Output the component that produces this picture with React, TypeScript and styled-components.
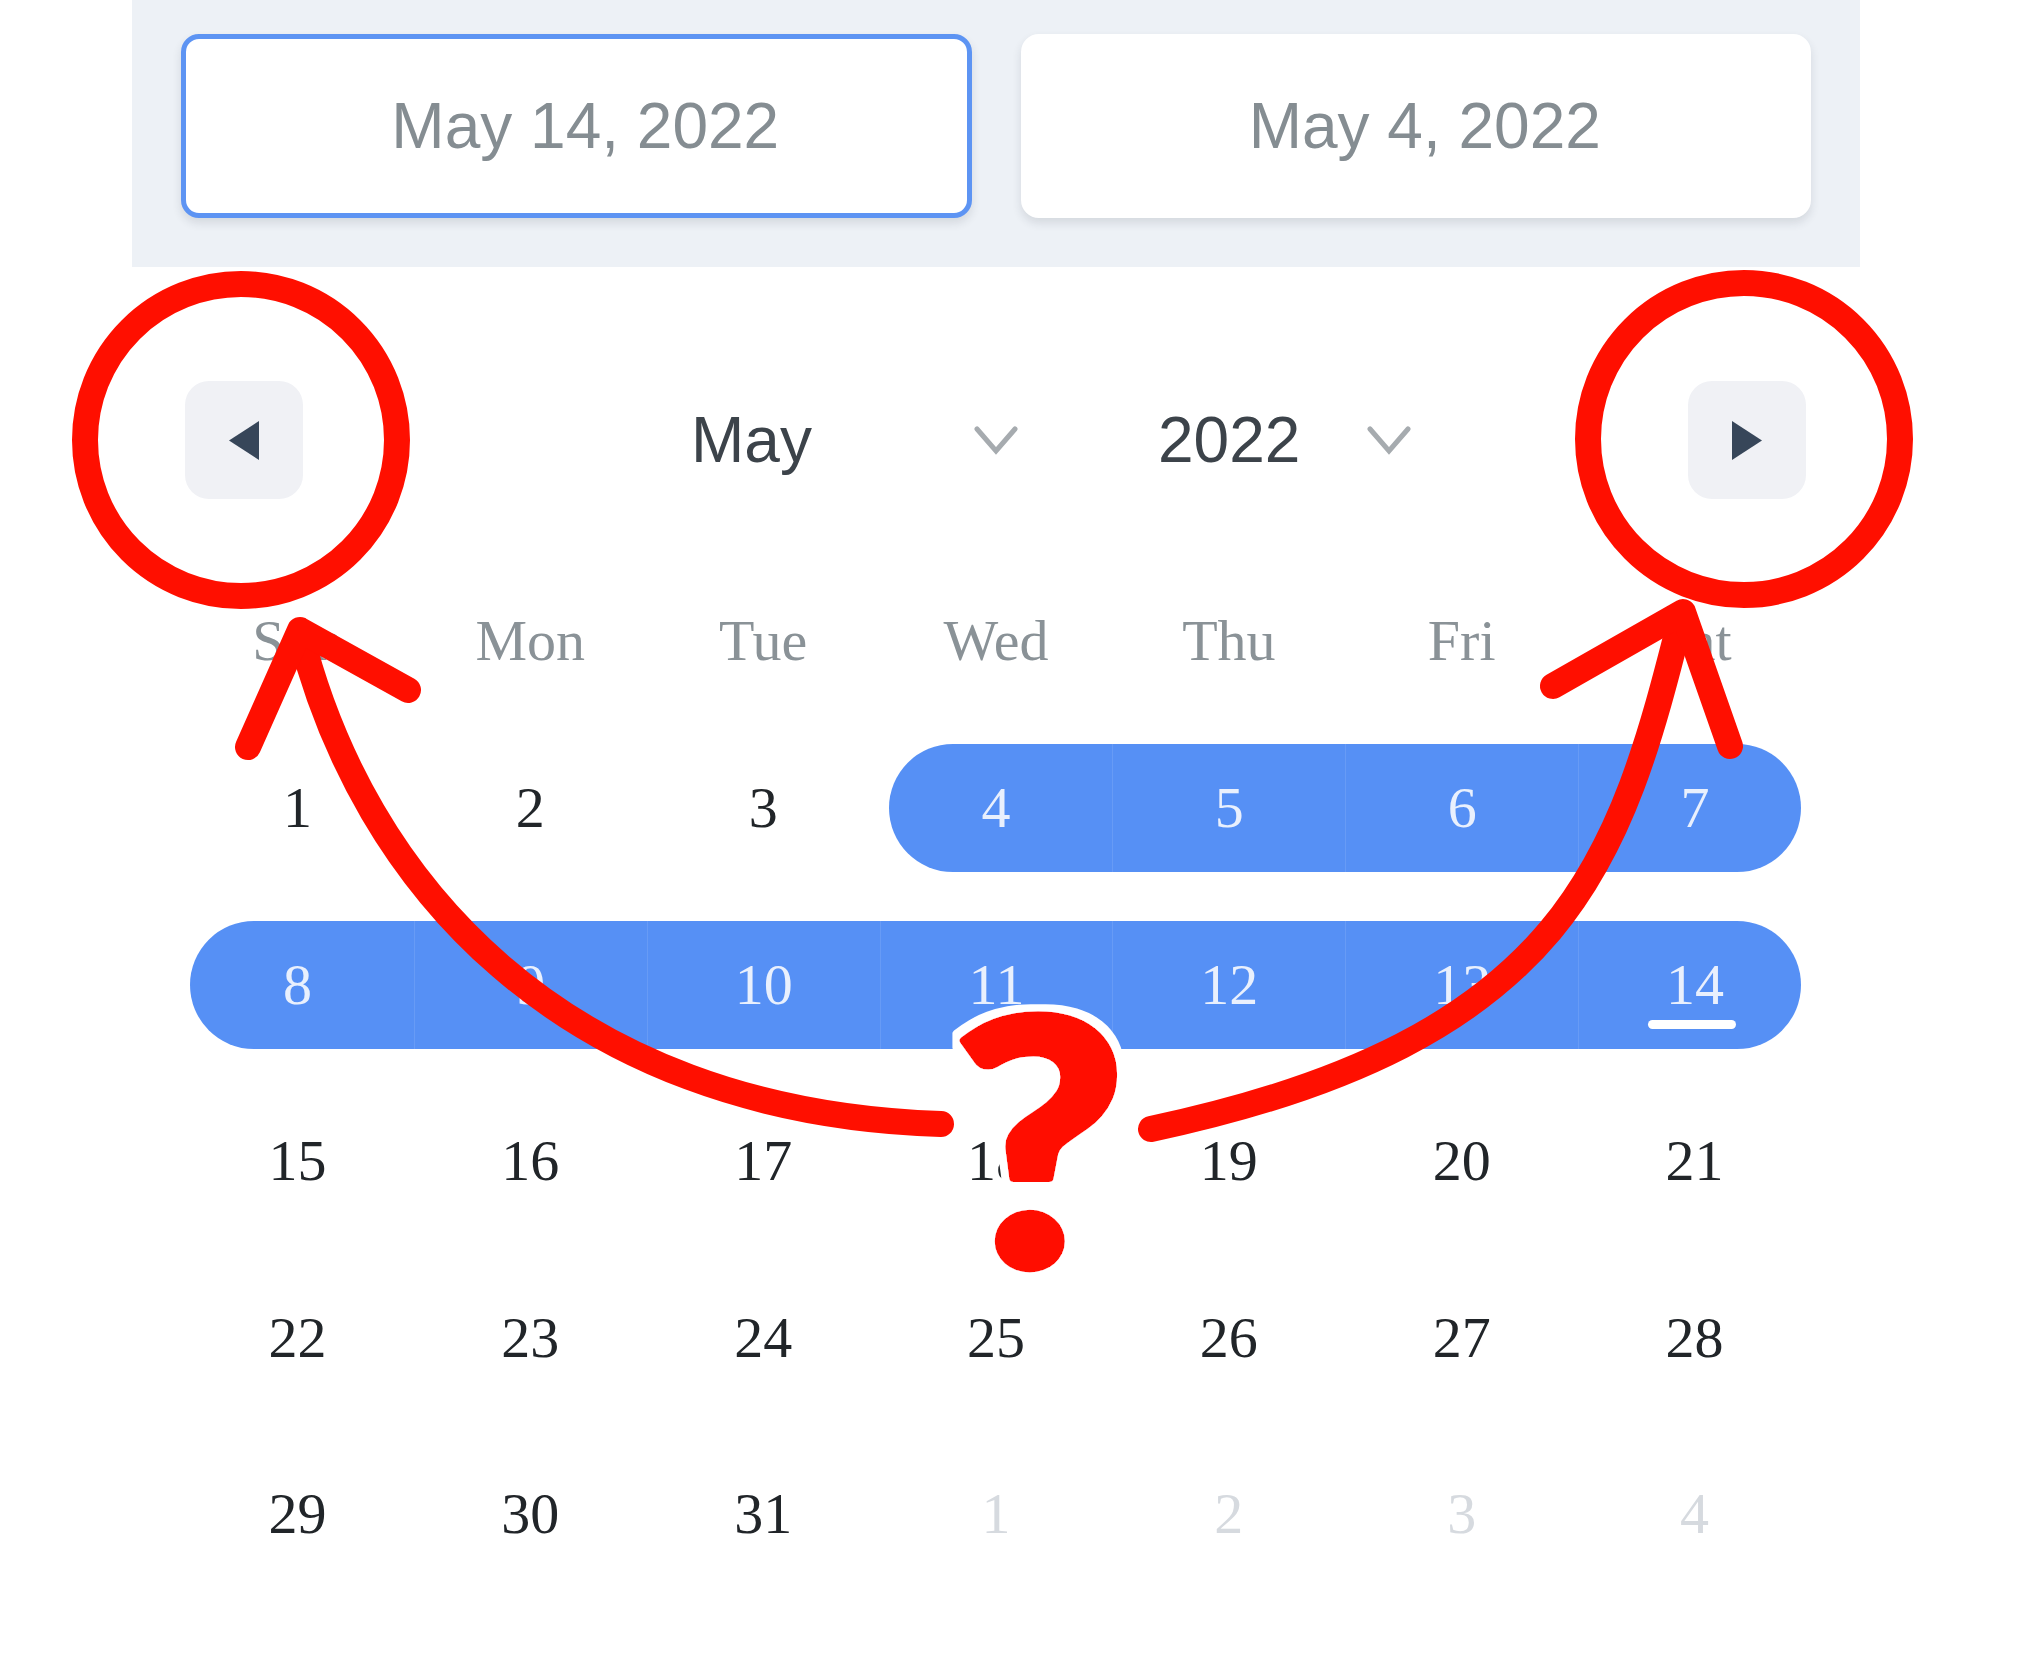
import React from 'react'
import styled, { createGlobalStyle } from 'styled-components'

const GlobalStyle = createGlobalStyle`
  html,
  body {
    margin: 0;
    padding: 0;
    background: #fff;
  }
  body {
    font-family: 'Liberation Sans', Arial, sans-serif;
  }
`

const Page = styled.div`
  position: relative;
  width: 2044px;
  height: 1653px;
  overflow: hidden;
  background: #fff;
`

const Picker = styled.div`
  margin-left: 132px;
  width: 1728px;
`

/*
 * range inputs
 */

const InputBar = styled.div`
  display: grid;
  grid-template-columns: 1fr 1fr;
  gap: 49px;
  padding: 34px 49px 49px;
  background: #edf1f6;
`

const DateField = styled.div<{ $active?: boolean }>`
  box-sizing: border-box;
  height: 184px;
  display: flex;
  align-items: center;
  justify-content: center;
  padding-left: 18px;
  background: #fff;
  border: 5px solid ${p => (p.$active ? '#5d94f3' : '#fff')};
  border-radius: 18px;
  box-shadow: 0 5px 10px rgba(30, 40, 60, 0.12);
  font-size: 64px;
  color: #858d92;
`

/*
 * calendar
 */

const Calendar = styled.div`
  padding: 114px 49px 0;
`

const Header = styled.div`
  display: flex;
  align-items: center;
  height: 118px;
  padding: 0 5px 0 4px;
`

const NavButton = styled.button`
  flex: none;
  width: 118px;
  height: 118px;
  padding: 0;
  border: 0;
  border-radius: 24px;
  background: #f0f1f5;
  display: flex;
  align-items: center;
  justify-content: center;
`

const Selects = styled.div`
  flex: 1;
  display: flex;
  align-items: center;
  gap: 140px;
  padding-left: 388px;
`

const Select = styled.div<{ $width: number }>`
  width: ${p => p.$width}px;
  display: flex;
  align-items: center;
  justify-content: space-between;
  font-size: 64px;
  color: #3c434a;
`

const WeekRow = styled.div`
  display: grid;
  grid-template-columns: repeat(7, 1fr);
  height: 80px;
  margin-top: 102px;
`

const WeekDay = styled.div`
  text-align: center;
  line-height: 80px;
  font-family: 'Liberation Serif', 'Times New Roman', serif;
  font-size: 58px;
  color: #8a9297;
`

const DayGrid = styled.div`
  display: grid;
  grid-template-columns: repeat(7, 1fr);
  grid-auto-rows: 128px;
  row-gap: 48.6px;
  margin-top: 63px;
`

type Tone = 'normal' | 'muted' | 'range'

const Day = styled.div<{ $tone: Tone; $start?: boolean; $end?: boolean; $today?: boolean }>`
  position: relative;
  box-sizing: border-box;
  text-align: center;
  line-height: 128px;
  font-family: 'Liberation Serif', 'Times New Roman', serif;
  font-size: 58px;
  color: ${p =>
    p.$tone === 'range' ? '#e9f0fd' : p.$tone === 'muted' ? '#d6dadf' : '#212529'};
  background: ${p => (p.$tone === 'range' ? '#5690f5' : 'transparent')};
  border-left: ${p =>
    p.$tone === 'range' && !p.$start ? '1px solid rgba(255, 255, 255, 0.1)' : '0'};
  ${p =>
    p.$start
      ? `
    margin-left: 9px;
    padding-right: 9px;
    border-top-left-radius: 64px;
    border-bottom-left-radius: 64px;
  `
      : ''}
  ${p =>
    p.$end
      ? `
    margin-right: 10px;
    padding-left: 10px;
    border-top-right-radius: 64px;
    border-bottom-right-radius: 64px;
  `
      : ''}
  ${p =>
    p.$today
      ? `
    &::after {
      content: '';
      position: absolute;
      left: 50%;
      bottom: 20px;
      width: 88px;
      height: 9px;
      margin-left: -42px;
      border-radius: 5px;
      background: #fff;
    }
  `
      : ''}
`

/*
 * red hand-drawn notes on top
 */

const Overlay = styled.svg`
  position: absolute;
  top: 0;
  left: 0;
  pointer-events: none;
`

const Chevron = () => (
  <svg width="44" height="29" viewBox="0 0 44 29">
    <polyline
      points="3,3 22,25 41,3"
      fill="none"
      stroke="#a6abaf"
      strokeWidth="5"
      strokeLinecap="round"
    />
  </svg>
)

const Arrow = ({ dir }: { dir: 'left' | 'right' }) => (
  <svg width="30" height="39" viewBox="0 0 30 39">
    <polygon
      points={dir === 'left' ? '30,0 30,39 0,19.5' : '0,0 0,39 30,19.5'}
      fill="#374659"
    />
  </svg>
)

const weekdays = ['Sun', 'Mon', 'Tue', 'Wed', 'Thu', 'Fri', 'Sat']

const rangeStart = 4
const rangeEnd = 14

const days = [
  ...Array.from({ length: 31 }, (_, i) => ({ n: i + 1, inMonth: true })),
  ...Array.from({ length: 4 }, (_, i) => ({ n: i + 1, inMonth: false })),
]

export default function App() {
  return (
    <Page>
      <GlobalStyle />
      <Picker>
        <InputBar>
          <DateField $active>May 14, 2022</DateField>
          <DateField>May 4, 2022</DateField>
        </InputBar>
        <Calendar>
          <Header>
            <NavButton aria-label="Previous month">
              <Arrow dir="left" />
            </NavButton>
            <Selects>
              <Select $width={327}>
                May
                <Chevron />
              </Select>
              <Select $width={253}>
                2022
                <Chevron />
              </Select>
            </Selects>
            <NavButton aria-label="Next month">
              <Arrow dir="right" />
            </NavButton>
          </Header>
          <WeekRow>
            {weekdays.map(d => (
              <WeekDay key={d}>{d}</WeekDay>
            ))}
          </WeekRow>
          <DayGrid>
            {days.map((d, i) => {
              const col = i % 7
              const inRange = d.inMonth && d.n >= rangeStart && d.n <= rangeEnd
              const tone: Tone = !d.inMonth ? 'muted' : inRange ? 'range' : 'normal'
              return (
                <Day
                  key={i}
                  $tone={tone}
                  $start={inRange && (d.n === rangeStart || col === 0)}
                  $end={inRange && (d.n === rangeEnd || col === 6)}
                  $today={inRange && d.n === rangeEnd}
                >
                  {d.n}
                </Day>
              )
            })}
          </DayGrid>
        </Calendar>
      </Picker>

      <Overlay width="2044" height="1653" viewBox="0 0 2044 1653">
        <defs>
          <filter id="white-edge" x="-20%" y="-20%" width="140%" height="140%">
            <feMorphology in="SourceAlpha" operator="dilate" radius="7" result="grown" />
            <feFlood floodColor="#fff" />
            <feComposite in2="grown" operator="in" result="edge" />
            <feMerge>
              <feMergeNode in="edge" />
              <feMergeNode in="SourceGraphic" />
            </feMerge>
          </filter>
        </defs>
        <g fill="none" stroke="#ff0f00" strokeWidth="26" strokeLinecap="round" strokeLinejoin="round">
          <circle cx="241" cy="440" r="156" />
          <circle cx="1744" cy="439" r="156" />
          <path d="M300 632 C362 880 560 1112 941 1124" />
          <path d="M248 747 L300 630 L408 690" />
          <path d="M1151 1129 C1570 1040 1620 860 1682 614" />
          <path d="M1553 686 L1683 612 L1730 746" />
        </g>
        <g filter="url(#white-edge)">
          <text
            x="1039"
            y="1266"
            textAnchor="middle"
            transform="translate(1039 0) scale(1.1 1) translate(-1039 0)"
            fontFamily="Lato, 'Liberation Sans', sans-serif"
            fontWeight="900"
            fontSize="342"
            fill="#ff0f00"
            stroke="#ff0f00"
            strokeWidth="8"
            strokeLinejoin="round"
          >
            ?
          </text>
        </g>
      </Overlay>
    </Page>
  )
}
